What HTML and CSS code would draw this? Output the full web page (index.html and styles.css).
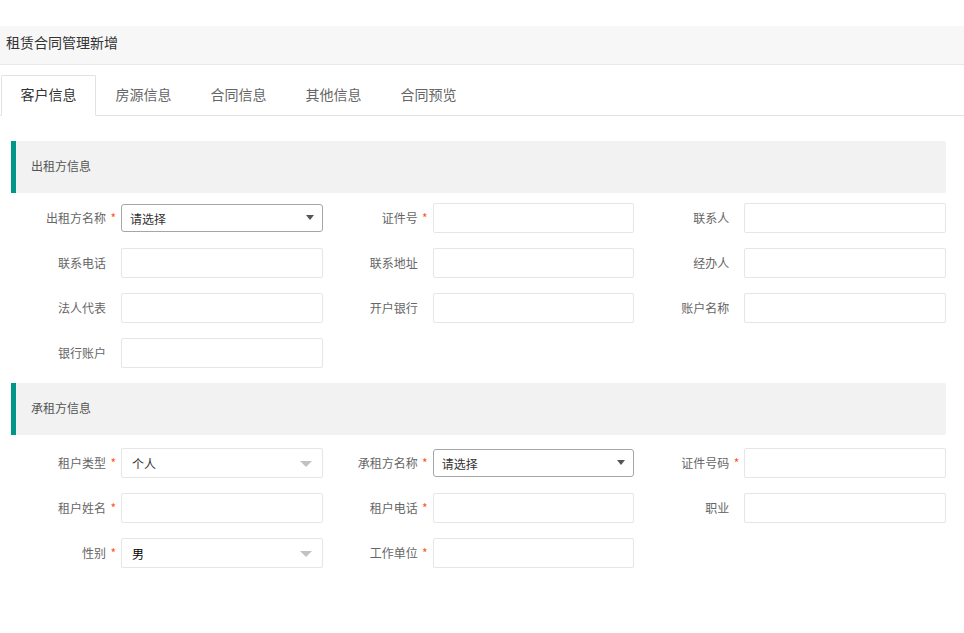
FILE: index.html
```html
<!DOCTYPE html>
<html lang="zh-CN">
<head>
<meta charset="utf-8">
<title>租赁合同管理新增</title>
<link rel="stylesheet" href="styles.css">
</head>
<body>
<div class="page">
  <div class="page-header">租赁合同管理新增</div>
  <div class="tabs">
    <ul class="tab-title">
      <li class="tab active">客户信息</li>
      <li class="tab">房源信息</li>
      <li class="tab">合同信息</li>
      <li class="tab">其他信息</li>
      <li class="tab">合同预览</li>
    </ul>
    <div class="tab-content">
      <div class="quote">出租方信息</div>
      <div class="form-grid">
        <div class="item"><label class="label req">出租方名称</label><div class="native-select"><span>请选择</span><i class="native-arrow"></i></div></div>
        <div class="item"><label class="label req">证件号</label><div class="input"></div></div>
        <div class="item"><label class="label">联系人</label><div class="input"></div></div>

        <div class="item"><label class="label">联系电话</label><div class="input"></div></div>
        <div class="item"><label class="label">联系地址</label><div class="input"></div></div>
        <div class="item"><label class="label">经办人</label><div class="input"></div></div>

        <div class="item"><label class="label">法人代表</label><div class="input"></div></div>
        <div class="item"><label class="label">开户银行</label><div class="input"></div></div>
        <div class="item"><label class="label">账户名称</label><div class="input"></div></div>

        <div class="item"><label class="label">银行账户</label><div class="input"></div></div>
      </div>

      <div class="quote">承租方信息</div>
      <div class="form-grid second">
        <div class="item"><label class="label req">租户类型</label><div class="input select"><span>个人</span><i class="arrow"></i></div></div>
        <div class="item"><label class="label req">承租方名称</label><div class="native-select"><span>请选择</span><i class="native-arrow"></i></div></div>
        <div class="item"><label class="label req">证件号码</label><div class="input"></div></div>

        <div class="item"><label class="label req">租户姓名</label><div class="input"></div></div>
        <div class="item"><label class="label req">租户电话</label><div class="input"></div></div>
        <div class="item"><label class="label">职业</label><div class="input"></div></div>

        <div class="item"><label class="label req">性别</label><div class="input select"><span class="dark">男</span><i class="arrow"></i></div></div>
        <div class="item"><label class="label req">工作单位</label><div class="input"></div></div>
      </div>
    </div>
  </div>
</div>
</body>
</html>
```

FILE: styles.css
```css
* { box-sizing: border-box; }
html, body { margin: 0; padding: 0; background: #fff; }
body {
  font-family: "Noto Sans CJK SC", "Noto Sans", "Liberation Sans", sans-serif;
  color: #333;
  font-size: 12px;
}
.page { padding-top: 26px; }
.page-header {
  height: 39px;
  line-height: 33px;
  padding-left: 6px;
  background: #f7f7f7;
  border-bottom: 1px solid #e8e8e8;
  font-size: 14px;
  color: #333;
}
.tabs { margin-top: 10px; }
.tab-title {
  list-style: none;
  margin: 0;
  padding: 0 0 0 1px;
  height: 41px;
  border-bottom: 1px solid #e2e2e2;
  display: flex;
}
.tab {
  width: 95px;
  padding: 0 15px;
  height: 41px;
  line-height: 38px;
  text-align: center;
  font-size: 14px;
  color: #666;
}
.tab.active {
  color: #333;
  background: #fff;
  border: 1px solid #e2e2e2;
  border-bottom-color: #fff;
  border-radius: 2px 2px 0 0;
  line-height: 36px;
}
.tab-content { padding: 25px 18px 0 11px; }
.quote {
  padding: 15px;
  line-height: 20px;
  height: 52px;
  border-left: 5px solid #009688;
  border-radius: 0 2px 2px 0;
  background: #f2f2f2;
  color: #555;
  font-size: 12px;
  margin-bottom: 10px;
}
.form-grid {
  display: grid;
  grid-template-columns: repeat(3, 1fr);
  row-gap: 15px;
  margin-bottom: 15px;
}
.form-grid.second { margin-top: 13px; }
.item { display: flex; align-items: center; height: 30px; }
.label {
  width: 110px;
  flex: none;
  padding-right: 15px;
  text-align: right;
  color: #666;
  font-size: 12px;
  position: relative;
  line-height: 30px;
}
.label.req::after {
  content: "*";
  position: absolute;
  right: 5px;
  top: 0;
  color: #ff5722;
  font-size: 12px;
}
.input {
  flex: 1;
  height: 30px;
  border: 1px solid #e6e6e6;
  border-radius: 2px;
  background: #fff;
  position: relative;
  display: flex;
  align-items: center;
  padding-left: 10px;
  color: #333;
}
.input .dark { color: #000; }
.arrow {
  position: absolute;
  right: 10px;
  top: 12px;
  width: 0; height: 0;
  border-left: 6px solid transparent;
  border-right: 6px solid transparent;
  border-top: 6px solid #c2c2c2;
}
.native-select {
  flex: 1;
  height: 28px;
  margin: 1px 0;
  border: 1px solid #a6a6a6;
  border-radius: 3px;
  background: #fff;
  position: relative;
  display: flex;
  align-items: center;
  padding-left: 8px;
  color: #333;
}
.native-arrow {
  position: absolute;
  right: 8px;
  top: 10px;
  width: 0; height: 0;
  border-left: 4px solid transparent;
  border-right: 4px solid transparent;
  border-top: 5px solid #555;
}
```
